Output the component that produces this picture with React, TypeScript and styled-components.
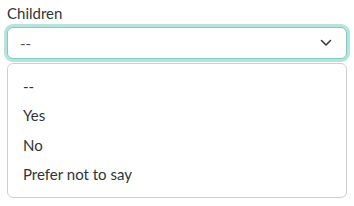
import React from 'react';
import styled, { createGlobalStyle } from 'styled-components';

const options = ['--', 'Yes', 'No', 'Prefer not to say'];

const Global = createGlobalStyle`
  body {
    margin: 0;
    background: #fff;
    font-family: 'Lato', 'Noto Sans', sans-serif;
    color: #333;
  }
`;

const Field = styled.div`
  display: flex;
  flex-direction: column;
  padding: 4px 7px 0 7px;
  width: 340px;
`;

const Label = styled.label`
  font-size: 15px;
  line-height: 18px;
  color: #2f3438;
  margin-bottom: 5px;
`;

const Select = styled.div`
  height: 32px;
  box-sizing: border-box;
  border: 1px solid #7fcdc1;
  border-radius: 6px;
  box-shadow: 0 0 0 3px #b6e3dc;
  display: flex;
  align-items: center;
  justify-content: space-between;
  padding: 0 14px 0 12px;
  font-size: 15px;
  color: #555;
  background: #fff;
`;

const Menu = styled.ul`
  list-style: none;
  margin: 4px 0 0 0;
  padding: 7px 0 8px 0;
  border: 1px solid #cfcfcf;
  border-radius: 6px;
  background: #fff;
`;

const Item = styled.li`
  height: 29.5px;
  display: flex;
  align-items: center;
  padding: 0 15px;
  font-size: 15px;
  color: #2f3438;
`;

const Chevron = () => (
  <svg width="12" height="8" viewBox="0 0 12 8" fill="none">
    <path d="M1.5 1.5 L6 6 L10.5 1.5" stroke="#3a3f44" strokeWidth="1.6" strokeLinecap="round" strokeLinejoin="round" />
  </svg>
);

export default function App() {
  return (
    <>
      <Global />
      <Field>
        <Label>Children</Label>
        <Select>
          <span>--</span>
          <Chevron />
        </Select>
        <Menu>
          {options.map((o) => (
            <Item key={o}>{o}</Item>
          ))}
        </Menu>
      </Field>
    </>
  );
}
